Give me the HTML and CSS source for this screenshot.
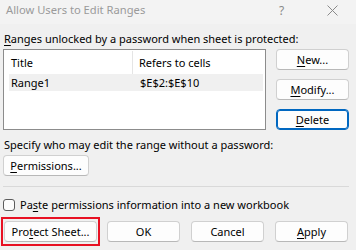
FILE: index.html
```html
<!DOCTYPE html>
<html>
<head>
<meta charset="utf-8">
<link rel="stylesheet" href="styles.css">
</head>
<body>
<div class="dialog">
  <div class="titlebar">
    <span class="title">Allow Users to Edit Ranges</span>
    <span class="help">?</span>
    <svg class="close" width="11" height="11" viewBox="0 0 11 11"><path d="M0.5 0.5L10.5 10.5M10.5 0.5L0.5 10.5" stroke="#8a8a8a" stroke-width="1" fill="none"/></svg>
  </div>
  <div class="content">
    <div class="label"><u>R</u>anges unlocked by a password when sheet is protected:</div>
    <div class="main">
      <div class="listbox">
        <div class="lrow header">
          <div class="col1">Title</div>
          <div class="col2">Refers to cells</div>
        </div>
        <div class="lrow sel">
          <div class="col1">Range1</div>
          <div class="col2">$E$2:$E$10</div>
        </div>
      </div>
      <div class="side">
        <div class="btn side-btn"><u>N</u>ew...</div>
        <div class="btn side-btn"><u>M</u>odify...</div>
        <div class="btn side-btn default"><u>D</u>elete</div>
      </div>
    </div>
    <div class="label specify">Specify who may edit the range without a password:</div>
    <div class="btn perm"><u>P</u>ermissions...</div>
    <div class="sep"></div>
    <div class="check-row">
      <span class="checkbox"></span>
      <span>Pa<u>s</u>te permissions information into a new workbook</span>
    </div>
    <div class="bottom">
      <div class="highlight"><div class="btn bbtn">Pro<u>t</u>ect Sheet...</div></div>
      <div class="btn bbtn">OK</div>
      <div class="btn bbtn">Cancel</div>
      <div class="btn bbtn"><u>A</u>pply</div>
    </div>
  </div>
</div>
</body>
</html>
```
FILE: styles.css
```css
* { box-sizing: border-box; }
html, body { margin: 0; padding: 0; }
body {
  width: 356px;
  height: 250px;
  overflow: hidden;
  background: #f0f0f0;
  font-family: "Noto Sans", "Open Sans", sans-serif;
  font-size: 11px;
  color: #000;
}
u { text-decoration-thickness: 1px; text-underline-offset: 2px; }
.dialog { width: 356px; height: 250px; display: flex; flex-direction: column; }
.titlebar {
  height: 24px;
  background: #f3f3f3;
  display: flex;
  align-items: center;
  padding-left: 6px;
  flex: none;
}
.title { color: #9a9a9a; font-size: 11.2px; line-height: 16px; flex: 1; margin-top: -4px; }
.help { color: #8a8a8a; font-size: 12px; width: 12px; margin-right: 36px; margin-top: -4px; }
.close { margin-right: 18px; margin-top: -4px; }
.content { padding: 7px 7px 0 3px; display: flex; flex-direction: column; }
.label { line-height: 16px; padding-left: 1px; }
.main { display: flex; margin-top: 2px; }
.listbox {
  width: 263px;
  height: 81px;
  background: #fff;
  border: 1px solid #8c8c8c;
  padding: 1px 2px 0 5px;
}
.lrow { display: flex; align-items: center; }
.lrow.header { height: 23px; }
.lrow .col1 { width: 124px; padding-left: 2px; height: 100%; display: flex; align-items: center; border-right: 1px solid #e5e5e5; }
.lrow .col2 { padding-left: 6px; }
.lrow.sel { height: 17px; background: #f0f0f0; }
.lrow.sel .col1 { border-right: none; width: 125px; }
.side { display: flex; flex-direction: column; gap: 9px; margin-left: 10px; }
.btn {
  background: #fdfdfd;
  border: 1px solid #d0d0d0;
  border-bottom-color: #b8b8b8;
  border-radius: 4px;
  display: flex;
  align-items: center;
  justify-content: center;
  line-height: 16px;
}
.side-btn { width: 73px; height: 21px; }
.side-btn.default { border: 1px solid #0067c0; box-shadow: inset 0 0 0 1px #0067c0; }
.specify { margin-top: 7px; }
.perm { width: 86px; height: 21px; margin-top: 2px; }
.sep { height: 1px; background: #d9d9d9; margin-top: 10px; margin-right: 0; }
.check-row { display: flex; align-items: center; margin-top: 10px; line-height: 16px; }
.checkbox {
  width: 12px; height: 12px;
  border: 1px solid #5c5c5c;
  border-radius: 3px;
  background: #fdfdfd;
  margin-right: 5px;
}
.bottom { display: flex; margin-top: 4px; margin-left: -2px; gap: 11px; align-items: center; }
.highlight { border: 2px solid #e81123; padding: 2px 1px; margin-right: -4px; }
.bbtn { width: 73px; height: 21px; }
.highlight .bbtn { width: 93px; }
```
